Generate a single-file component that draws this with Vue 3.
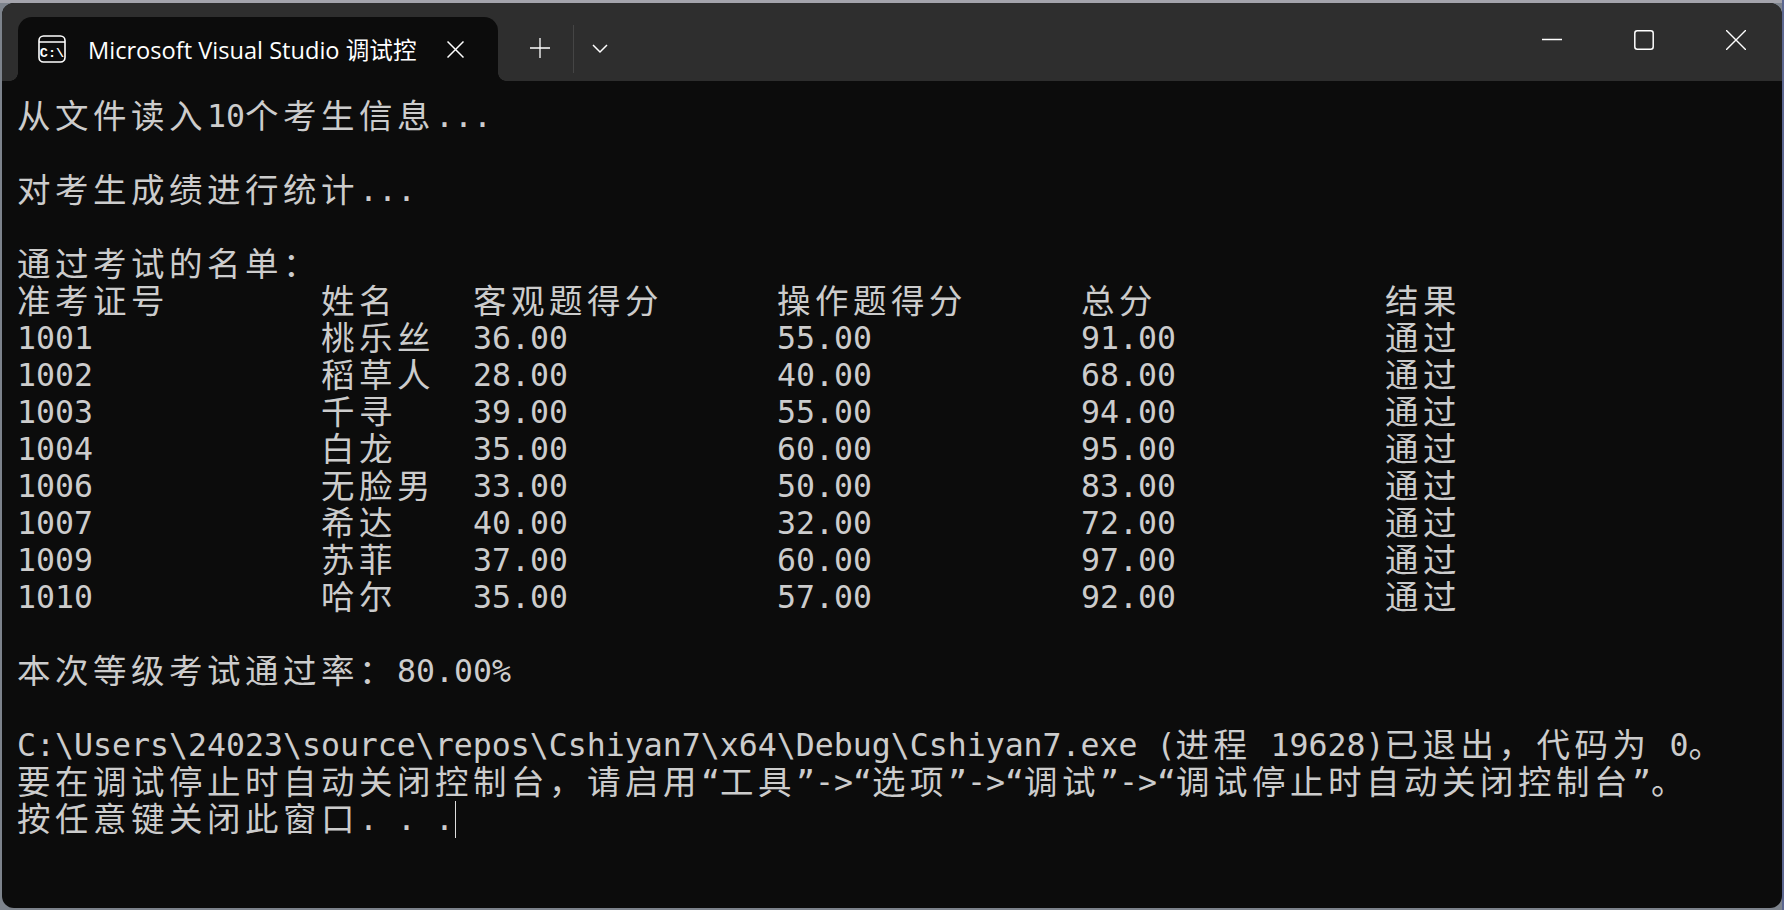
<script setup>
const head = [
  '从文件读入10个考生信息...',
  '',
  '对考生成绩进行统计...',
  '',
  '通过考试的名单：',
]
const rows = [
  ['准考证号', '姓名', '客观题得分', '操作题得分', '总分', '结果'],
  ['1001', '桃乐丝', '36.00', '55.00', '91.00', '通过'],
  ['1002', '稻草人', '28.00', '40.00', '68.00', '通过'],
  ['1003', '千寻', '39.00', '55.00', '94.00', '通过'],
  ['1004', '白龙', '35.00', '60.00', '95.00', '通过'],
  ['1006', '无脸男', '33.00', '50.00', '83.00', '通过'],
  ['1007', '希达', '40.00', '32.00', '72.00', '通过'],
  ['1009', '苏菲', '37.00', '60.00', '97.00', '通过'],
  ['1010', '哈尔', '35.00', '57.00', '92.00', '通过'],
]
const foot = [
  '',
  '本次等级考试通过率：80.00%',
  '',
  'C:\\Users\\24023\\source\\repos\\Cshiyan7\\x64\\Debug\\Cshiyan7.exe (进程 19628)已退出，代码为 0。',
  '要在调试停止时自动关闭控制台，请启用“工具”->“选项”->“调试”->“调试停止时自动关闭控制台”。',
]
const wide = /[\u3000-\u9fff\uff00-\uffef]+/g
function runs(text) {
  const out = []
  let last = 0
  for (const m of text.matchAll(wide)) {
    if (m.index > last) out.push({ t: text.slice(last, m.index), cjk: false })
    out.push({ t: m[0], cjk: true })
    last = m.index + m[0].length
  }
  if (last < text.length) out.push({ t: text.slice(last), cjk: false })
  return out
}
</script>

<template>
  <div class="desk">
    <div class="window">
      <header class="bar">
        <div class="tab">
          <svg class="tab-ico" width="28" height="28" viewBox="0 0 28 28" fill="none" stroke="#fff" stroke-width="1.6">
            <rect x="1" y="1" width="26" height="26" rx="4.5" />
            <path d="M1 7h26" />
            <text x="14" y="21.5" fill="#fff" stroke="none" font-family="'Liberation Mono', monospace" font-size="13.5" font-weight="700" text-anchor="middle">C:\</text>
          </svg>
          <span class="tab-title">Microsoft Visual Studio 调试控</span>
          <svg class="tab-x" width="17" height="17" viewBox="0 0 17 17" stroke="#fff" stroke-width="1.5"><path d="M.5.5l16 16M16.5.5l-16 16" /></svg>
        </div>
        <svg class="plus" width="20" height="20" viewBox="0 0 20 20" stroke="#fff" stroke-width="1.3"><path d="M10 0v20M0 10h20" /></svg>
        <i class="sep"></i>
        <svg class="chev" width="16" height="10" viewBox="0 0 16 10" fill="none" stroke="#fff" stroke-width="1.5"><path d="M1 1l7 7 7-7" /></svg>
        <div class="caption">
          <button class="cap" aria-label="最小化"><svg width="20" height="20" viewBox="0 0 20 20" stroke="#fff" stroke-width="1.5"><path d="M0 9.5h20" /></svg></button>
          <button class="cap" aria-label="最大化"><svg width="20" height="20" viewBox="0 0 20 20" fill="none" stroke="#fff" stroke-width="1.5"><rect x=".8" y=".8" width="18.4" height="18.4" rx="2.5" /></svg></button>
          <button class="cap" aria-label="关闭"><svg width="20" height="20" viewBox="0 0 20 20" stroke="#fff" stroke-width="1.4"><path d="M0 0l20 20M20 0L0 20" /></svg></button>
        </div>
      </header>
      <main class="term">
        <div v-for="(l, i) in head" :key="'h' + i" class="line">
          <span v-for="(r, j) in runs(l)" :key="j" :class="{ cjk: r.cjk }">{{ r.t }}</span>
        </div>
        <div v-for="(row, i) in rows" :key="'r' + i" class="line row">
          <span v-for="(c, j) in row" :key="j"><span v-for="(r, k) in runs(c)" :key="k" :class="{ cjk: r.cjk }">{{ r.t }}</span></span>
        </div>
        <div v-for="(l, i) in foot" :key="'f' + i" class="line">
          <span v-for="(r, j) in runs(l)" :key="j" :class="{ cjk: r.cjk }">{{ r.t }}</span>
        </div>
        <div class="line">
          <span class="cjk">按任意键关闭此窗口</span><span>. . .</span><i class="cursor"></i>
        </div>
      </main>
    </div>
  </div>
</template>

<style>
html, body { margin: 0; background: #7d838c; overflow: hidden; }
</style>

<style scoped>
.desk {
  width: 1784px;
  height: 910px;
  box-sizing: border-box;
  padding: 3px 2px 2px 2px;
  background:
    linear-gradient(to left, #5c6790 0 2px, transparent 2px),
    linear-gradient(#a4a4ac 0 3px, #7d838c 3px);
}
.window {
  height: 100%;
  display: flex;
  flex-direction: column;
  background: #0c0c0c;
  border-radius: 12px;
  overflow: hidden;
}
.bar {
  height: 78px;
  flex: none;
  box-sizing: border-box;
  padding-top: 14px;
  display: flex;
  align-items: center;
  background: #2e2e2e;
}
.tab {
  position: relative;
  align-self: flex-end;
  width: 480px;
  height: 64px;
  margin-left: 16px;
  box-sizing: border-box;
  padding: 0 34px 0 20px;
  display: flex;
  align-items: center;
  background: #0c0c0c;
  border-radius: 14px 14px 0 0;
}
.tab::before,
.tab::after {
  content: "";
  position: absolute;
  bottom: 0;
  width: 8px;
  height: 8px;
}
.tab::before { left: -8px; background: radial-gradient(circle at 0 0, transparent 7.5px, #0c0c0c 8px); }
.tab::after { right: -8px; background: radial-gradient(circle at 100% 0, transparent 7.5px, #0c0c0c 8px); }
.tab-ico { flex: none; }
.tab-title {
  flex: 1;
  margin-left: 22px;
  font: 23.6px "Open Sans", "Noto Sans CJK SC", sans-serif;
  color: #fff;
  white-space: nowrap;
}
.tab-x { flex: none; }
.plus { margin-left: 32px; flex: none; margin-top: -2px; }
.sep { width: 1px; height: 48px; margin-left: 23px; background: #454545; flex: none; }
.chev { margin-left: 18px; flex: none; }
.caption { margin-left: auto; display: flex; align-self: flex-start; padding: 13px 36px 0 0; gap: 72px; }
.cap { padding: 0; border: 0; background: none; width: 20px; height: 20px; line-height: 0; }
.term {
  flex: 1;
  padding: 17px 0 0 15px;
  font: 31.56px/37px "DejaVu Sans Mono", "Noto Sans CJK SC", monospace;
  color: #cccccc;
  white-space: pre;
}
.line { height: 37px; }
.row { display: grid; grid-template-columns: 304px 152px 304px 304px 304px 1fr; }
.cjk { font-size: 33.5px; line-height: 0; letter-spacing: 4.5px; vertical-align: -1px; font-family: "Noto Sans CJK SC", sans-serif; }
.cursor { display: inline-block; vertical-align: top; width: 1px; height: 37px; background: #ddd; margin-left: 1px; }
</style>
